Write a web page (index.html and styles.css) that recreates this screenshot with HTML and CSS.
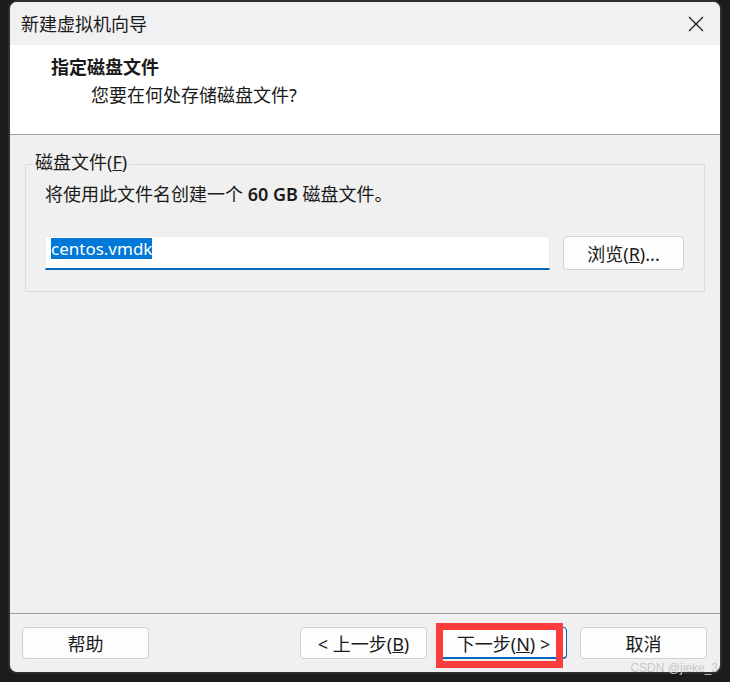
FILE: index.html
```html
<!DOCTYPE html>
<html lang="zh-CN">
<head>
  <meta charset="UTF-8">
  <title>新建虚拟机向导</title>
  <link rel="stylesheet" href="styles.css">
</head>
<body>

  <div class="screen">
    <div class="window">
      <div class="titlebar">
        <span class="title">新建虚拟机向导</span>
        <svg class="close" width="16" height="16" viewBox="0 0 16 16">
          <path d="M1 1 L15 15 M15 1 L1 15" stroke="#1a1a1a" stroke-width="1.3" fill="none"/>
        </svg>
      </div>

      <div class="header">
        <div class="heading">指定磁盘文件</div>
        <div class="subheading">您要在何处存储磁盘文件?</div>
      </div>

      <div class="content">
        <fieldset class="group">
          <legend>磁盘文件(<u>F</u>)</legend>
          <p class="hint">将使用此文件名创建一个 <b>60 GB</b> 磁盘文件。</p>
          <div class="file-row">
            <div class="textbox"><span class="selected">centos.vmdk</span></div>
            <button class="btn browse">浏览(<u>R</u>)...</button>
          </div>
        </fieldset>
      </div>

      <div class="footer">
        <button class="btn help">帮助</button>
        <button class="btn">&lt; 上一步(<u>B</u>)</button>
        <button class="btn default">下一步(<u>N</u>) &gt;</button>
        <button class="btn">取消</button>
      </div>
    </div>

    <!-- annotation drawn over the screenshot -->
    <div class="mark"></div>
    <div class="watermark">CSDN @jieke_3</div>
  </div>

</body>
</html>
```

FILE: styles.css
```css
body {
  margin: 0;
  background: #1c1c1c;
  font-family: "Noto Sans", "Noto Sans CJK SC", sans-serif;
  color: #1a1a1a;
}

.screen {
  position: relative;
  width: 730px;
  height: 682px;
  padding-left: 8px;
  box-sizing: border-box;
}

.window {
  width: 714px;
  height: 674px;
  box-sizing: border-box;
  border: 2px solid #2f2f2f;
  border-radius: 9px;
  overflow: hidden;
  background: #f0f0f0;
  display: flex;
  flex-direction: column;
}

.titlebar {
  height: 43px;
  flex: none;
  display: flex;
  align-items: center;
  justify-content: space-between;
  padding: 0 16px 0 11px;
  background: #f1f1f4;
  font-size: 18px;
  line-height: 24px;
}

.header {
  height: 90px;
  flex: none;
  box-sizing: border-box;
  background: #fff;
  border-bottom: 1px solid #a0a0a0;
  padding: 10px 0 0 41px;
  font-size: 18px;
  line-height: 24px;
}

.heading {
  font-weight: bold;
}

.subheading {
  margin-top: 4px;
  padding-left: 40px;
}

.content {
  flex: 1;
  padding: 15px 15px 0 15px;
}

.group {
  margin: 0;
  border: 1px solid #dcdcdc;
  padding: 0 20px 21px 19px;
}

.group legend {
  margin-left: -12px;
  padding: 0 2px 4px;
  font-size: 18px;
  line-height: 24px;
}

.hint {
  margin: 4px 0 0;
  font-size: 18px;
  line-height: 24px;
}

.hint b {
  font-weight: 600;
}

.file-row {
  display: flex;
  gap: 13px;
  margin-top: 30px;
  height: 34px;
}

.textbox {
  flex: 1;
  box-sizing: border-box;
  background: #fff;
  border: 1px solid #ececec;
  border-bottom: 2px solid #0067c0;
  border-radius: 3px 3px 0 0;
  padding: 1px 0 0 5px;
}

.selected {
  display: inline-block;
  background: #0078d7;
  color: #fff;
  font-family: "Noto Sans", sans-serif;
  font-size: 17px;
  line-height: 21px;
}

.btn {
  font-family: inherit;
  font-size: 18px;
  color: #1a1a1a;
  background: #fdfdfd;
  border: 1px solid #d0d0d0;
  border-radius: 4px;
  padding: 0;
  cursor: pointer;
}

.browse {
  width: 121px;
}

.footer {
  height: 59px;
  flex: none;
  box-sizing: border-box;
  border-top: 1px solid #a0a0a0;
  padding: 13px 13px 0 12px;
  display: flex;
  align-items: flex-start;
  gap: 13px;
}

.footer .btn {
  width: 127px;
  height: 32px;
}

.footer .help {
  margin-right: auto;
}

.footer .default {
  border: 1px solid #0067c0;
  border-bottom-width: 2px;
}

.mark {
  position: absolute;
  left: 436px;
  top: 623px;
  width: 127px;
  height: 45px;
  box-sizing: border-box;
  border: 7px solid #fa3c3c;
}

.watermark {
  position: absolute;
  right: 12px;
  top: 661px;
  font-family: "Liberation Sans", sans-serif;
  font-size: 12px;
  color: #c8c8c8;
}
```
